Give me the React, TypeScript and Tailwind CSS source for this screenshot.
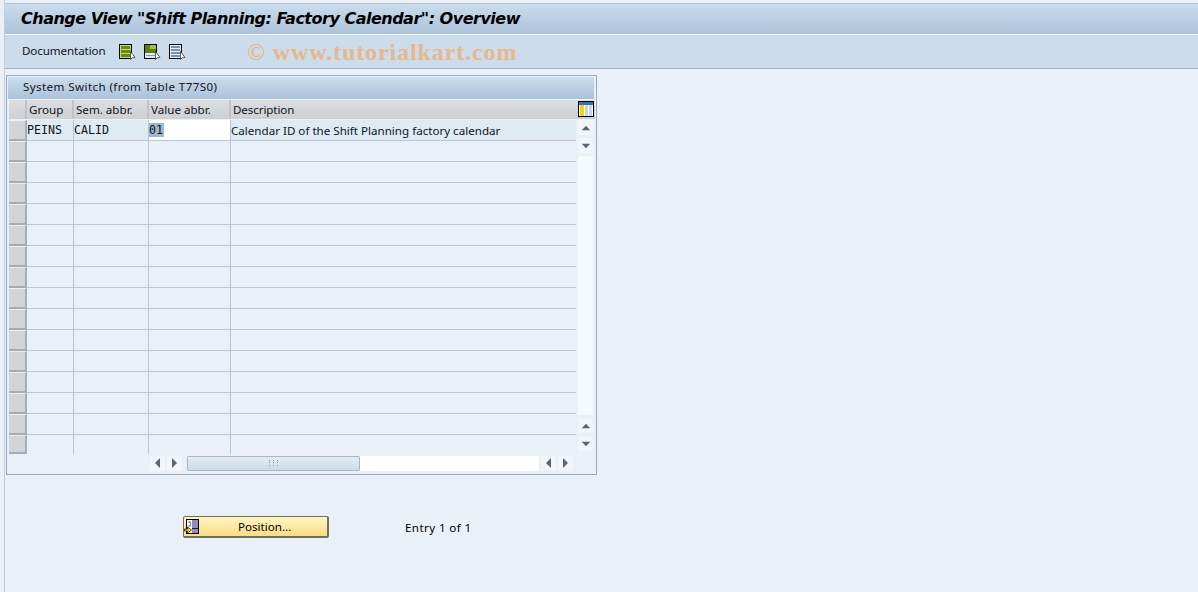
import React from "react";

const font = { fontFamily: '"Noto Sans", "Liberation Sans", sans-serif' };
const mono = { fontFamily: '"DejaVu Sans Mono", monospace' };

function DocIcon({ kind }: { kind: 0 | 1 | 2 }) {
  const c1 = kind === 2 ? "#6f94b4" : "#6b8e00";
  return (
    <svg width="17" height="16" viewBox="0 0 17 16" className="block">
      <rect x="0.5" y="0.5" width="12" height="14" fill={kind === 2 ? "#e8eef4" : "#c4d68c"} stroke="#000" />
      {kind === 0 && (
        <g fill={c1}>
          <rect x="2" y="2" width="9" height="3" />
          <rect x="2" y="6" width="9" height="3" />
          <rect x="2" y="10" width="9" height="3" />
        </g>
      )}
      {kind === 1 && (
        <g>
          <rect x="1" y="1" width="11" height="8" fill="#5f8000" />
          <rect x="6" y="1" width="6" height="4" fill="#a8c040" />
          <rect x="1" y="9" width="11" height="5" fill="#dfe8f0" />
          <rect x="2" y="11" width="9" height="1" fill="#7a9cbc" />
        </g>
      )}
      {kind === 2 && (
        <g fill={c1}>
          <rect x="2" y="2" width="9" height="2" />
          <rect x="2" y="5" width="9" height="2" />
          <rect x="2" y="8" width="9" height="2" />
          <rect x="2" y="11" width="9" height="2" />
        </g>
      )}
      <path d="M11.5 7.5 L11.5 15.5 L13.2 13.8 L16 13.5 Z" fill="#fff" stroke="#222" strokeWidth="0.7" />
    </svg>
  );
}

function ColumnsIcon() {
  return (
    <svg width="16" height="16" viewBox="0 0 16 16" className="block">
      <rect x="0.5" y="0.5" width="15" height="15" fill="#fff" stroke="#000" />
      <rect x="1" y="1" width="14" height="3" fill="#3f6fa8" />
      <rect x="2" y="4" width="4" height="11" fill="#f5d800" />
      <rect x="7" y="4" width="3" height="11" fill="#c9d6e2" />
      <rect x="11" y="4" width="3" height="11" fill="#c9d6e2" />
    </svg>
  );
}

function PositionIcon() {
  return (
    <svg width="16" height="15" viewBox="0 0 16 15" className="block">
      <rect x="2.5" y="0.5" width="12" height="14" fill="#fff" stroke="#000" />
      <rect x="8" y="1" width="6" height="13" fill="#8c8cc0" />
      <rect x="8" y="9" width="6" height="1" fill="#222" />
      <path d="M4 3 H7 M5.5 3 L7 5 L5.5 7 M4 7 H7" fill="none" stroke="#777" />
      <path d="M0.5 10 H3.5 V8 L7.5 11 L3.5 14 V12 H0.5 Z" fill="#ffd800" stroke="#000" strokeWidth="0.7" />
    </svg>
  );
}

function Grip() {
  return (
    <svg width="9" height="6" viewBox="0 0 9 6" className="block">
      <g fill="#8b98a5">
        {[0, 4, 8].map((x) => (
          <React.Fragment key={x}>
            <rect x={x} y="0" width="1" height="1" />
            <rect x={x} y="2" width="1" height="1" />
            <rect x={x} y="5" width="1" height="1" />
          </React.Fragment>
        ))}
      </g>
    </svg>
  );
}

function Arrow({ dir }: { dir: "up" | "down" | "left" | "right" }) {
  const d = {
    up: "M5 1 L10 6 H0 Z",
    down: "M0 1 H10 L5 6 Z",
    left: "M5 0 V10 L0 5 Z",
    right: "M0 0 V10 L5 5 Z",
  }[dir];
  const vertical = dir === "up" || dir === "down";
  return (
    <div className="w-[15px] h-[15px] bg-[#f2f6fa] flex items-center justify-center shrink-0">
      <svg width={vertical ? 10 : 5} height={vertical ? 6 : 10} viewBox={vertical ? "0 0 10 7" : "0 0 5 10"} className="block">
        <path d={d} fill="#55687a" />
      </svg>
    </div>
  );
}

const rowCells = "border-r border-[#bcc6d2] h-full shrink-0";

function Row({ first, last }: { first?: boolean; last?: boolean }) {
  return (
    <div className={`flex ${last ? "h-[19px]" : "h-[21px]"} ${first ? "bg-[#deeaf4]" : ""}`}>
      <div className="w-[18px] h-full shrink-0 bg-[#d2d5d8] border-b-2 border-r-2 border-[#a5acb4] border-t border-t-[#eceef0]" />
      <div className={`flex-1 flex h-full text-[#10141a] ${last ? "" : "border-b border-[#bcc6d2]"}`}>
        <div className={`${rowCells} w-[47px] leading-[21px] text-[11.6px]`} style={mono}>{first ? "PEINS" : ""}</div>
        <div className={`${rowCells} w-[75px] leading-[21px] text-[11.6px]`} style={mono}>{first ? "CALID" : ""}</div>
        <div className={`${rowCells} w-[82px] ${first ? "bg-white" : ""}`}>
          {first && (
            <span className="block w-[15px] bg-[#9db7d3] leading-[14px] mt-[3px] text-[11.6px]" style={mono}>01</span>
          )}
        </div>
        <div className="flex-1 leading-[21px] whitespace-nowrap">{first ? "Calendar ID of the Shift Planning factory calendar" : ""}</div>
      </div>
    </div>
  );
}

function Head({ w, children }: { w: string; children: React.ReactNode }) {
  return <div className={`${w} shrink-0 border-r-2 border-[#bfc3c8] pl-[2px] leading-[19px]`}>{children}</div>;
}

export default function App() {
  const rows = Array.from({ length: 16 }, (_, i) => i);
  return (
    <div className="w-[1198px] h-[592px] overflow-hidden bg-[#e9f0f7] pl-[4px] text-[11.6px] text-[#10141a]" style={font}>
      <div className="h-[592px] border-l border-[#c5ccd4]">
        <div className="h-[4px] bg-[#e9f0f7] border-b border-[#b9c3cf]" />
        <div className="h-[31px] bg-gradient-to-b from-[#cbdded] to-[#abc2da] border-b border-[#eef3f8] pl-[16px] flex items-center">
          <span className="text-[16px] font-bold italic text-black whitespace-nowrap" style={{ fontFamily: '"DejaVu Sans", sans-serif', letterSpacing: "-0.5px" }}>
            Change View "Shift Planning: Factory Calendar": Overview
          </span>
        </div>
        <div className="h-[34px] bg-[#cddceb] border-b border-[#9fb4ca] flex items-center pl-[17px]">
          <span className="w-[97px] shrink-0 tracking-[-0.1px] pb-[1px]">Documentation</span>
          <div className="flex gap-[8px]">
            <DocIcon kind={0} />
            <DocIcon kind={1} />
            <DocIcon kind={2} />
          </div>
          <span
            className="ml-[61px] text-[24px] font-bold text-[#e3b98d] whitespace-nowrap"
            style={{ fontFamily: '"Liberation Serif", serif', letterSpacing: "0.9px" }}
          >
            © www.tutorialkart.com
          </span>
        </div>

        <div className="ml-[1px] mt-[6px] w-[591px] h-[400px] border border-[#8fabc8] p-[1px] flex flex-col">
          <div className="h-[22px] bg-gradient-to-b from-[#cbdded] to-[#abc2da] border-r border-[#e9f0f7] pl-[15px] leading-[20px] shrink-0 tracking-[0.4px]">
            System Switch (from Table T77S0)
          </div>
          <div className="flex-1 pl-[1px] flex flex-col">
            <div className="flex h-[21px] bg-gradient-to-b from-[#dcdee0] to-[#ccd0d4] border-t border-[#eef0f2] border-b border-[#b4bac2] shrink-0">
              <Head w="w-[18px]"> </Head>
              <Head w="w-[47px]">Group</Head>
              <Head w="w-[75px]">Sem. abbr.</Head>
              <Head w="w-[82px]">Value abbr.</Head>
              <div className="flex-1 pl-[2px] leading-[19px] tracking-[-0.1px]">Description</div>
              <div className="w-[18px] flex items-start justify-center pt-[1px]">
                <ColumnsIcon />
              </div>
            </div>
            <div className="flex">
              <div className="w-[567px] shrink-0">
                {rows.map((r) => (
                  <Row key={r} first={r === 0} last={r === 15} />
                ))}
              </div>
              <div className="flex flex-col items-center w-[20px] gap-[3px] h-[334px]">
                <Arrow dir="up" />
                <Arrow dir="down" />
                <div className="w-[15px] h-[259px] bg-[#f7fafc]" />
                <Arrow dir="up" />
                <Arrow dir="down" />
              </div>
            </div>
            <div className="flex items-center pl-[141px] gap-[2px] h-[16px] mt-[1px]">
              <Arrow dir="left" />
              <Arrow dir="right" />
              <div className="w-[352px] h-[15px] bg-white flex ml-[3px]">
                <div className="w-[173px] h-[15px] bg-gradient-to-b from-[#e4ecf3] to-[#cddbe8] border border-[#a9b6c3] rounded-[1px] flex items-center justify-center">
                  <Grip />
                </div>
              </div>
              <Arrow dir="left" />
              <Arrow dir="right" />
            </div>
          </div>
        </div>

        <div className="flex items-center mt-[41px] pl-[178px]">
          <button className="w-[146px] h-[22px] rounded-[2px] border border-[#6f6f5f] border-b-2 border-r-2 bg-gradient-to-b from-[#fff6c4] to-[#fbdc84] flex items-center pl-[0px]">
            <PositionIcon />
            <span className="ml-[38px] text-[11.6px] leading-[20px] text-black">Position...</span>
          </button>
          <span className="ml-[76px] text-black mt-[1px] tracking-[0.4px]">Entry 1 of 1</span>
        </div>
      </div>
    </div>
  );
}
